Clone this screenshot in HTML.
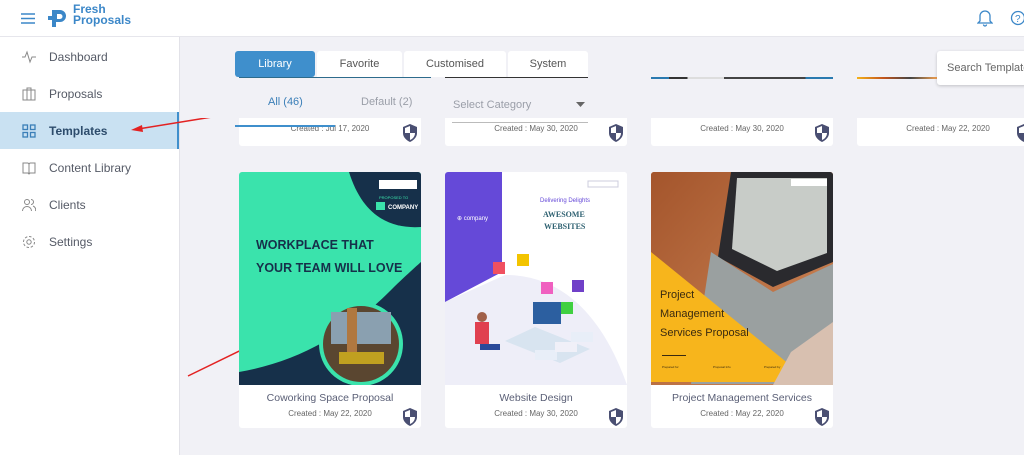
<!DOCTYPE html>
<html><head><meta charset="utf-8"><style>
*{margin:0;padding:0;box-sizing:border-box}
body{width:1024px;height:455px;overflow:hidden;background:#f1f1f6;font-family:"Liberation Sans",sans-serif;position:relative}
.hdr{position:absolute;left:0;top:0;width:1024px;height:37px;background:#fff;border-bottom:1px solid #e6e6ec}
.side{position:absolute;left:0;top:37px;width:180px;height:418px;background:#fff;border-right:1px solid #e2e2e8}
.nav{position:absolute;left:0;width:179px;height:37px;font-size:12px;color:#555a66;display:flex;align-items:center;padding-left:49px}
.nav svg{position:absolute;left:22px;top:12px}
.nav.act{background:#c9e1f2;color:#2d4c6c;font-weight:bold;border-right:2px solid #3f8fcc}
.card{position:absolute;width:182px;background:#fff;border-radius:3px;overflow:hidden}
.cap{position:absolute;left:0;width:182px;text-align:center;color:#5a5f76}
.t1{font-size:10.5px}.t2{font-size:8px;color:#666}
.sh{position:absolute}
.tab{position:absolute;top:51px;height:26px;background:#fff;font-size:11px;color:#555;display:flex;align-items:center;justify-content:center;border-radius:3px 3px 0 0}
</style></head><body>
<div class="hdr">
<svg style="position:absolute;left:21px;top:13px" width="14" height="11"><path d="M0 1H14M0 5.5H14M0 10H14" stroke="#3b87c8" stroke-width="1.6"/></svg>
<svg style="position:absolute;left:48px;top:7px" width="20" height="22"><path d="M4 3h8a6 6 0 0 1 0 12h-4v5h-4z" fill="#3b87c8"/><path d="M9 7h3a2.5 2.5 0 0 1 0 5h-3z" fill="#fff"/><rect x="0" y="9" width="5" height="4" fill="#3b87c8"/></svg>
<div style="position:absolute;left:73px;top:4px;font-size:12px;line-height:11px;color:#3b87c8;font-weight:bold">Fresh<br>Proposals</div>
<svg style="position:absolute;left:977px;top:9px" width="16" height="18"><path d="M3 12V7a5 5 0 0 1 10 0v5l2 2H1z M6.5 15.5a1.5 1.5 0 0 0 3 0" fill="none" stroke="#3b87c8" stroke-width="1.3"/></svg>
<svg style="position:absolute;left:1010px;top:9px" width="16" height="18"><circle cx="8" cy="9" r="6.5" fill="none" stroke="#3b87c8" stroke-width="1.3"/><text x="5" y="13" font-size="10" fill="#3b87c8" font-family="Liberation Sans">?</text></svg>
</div>
<div class="side">
<div class="nav" style="top:1px"><svg width="14" height="14"><path d="M0 7h3l2-5 3 10 2-5h4" fill="none" stroke="#888" stroke-width="1"/></svg>Dashboard</div>
<div class="nav" style="top:38px"><svg width="14" height="14"><rect x="1" y="3" width="12" height="10" fill="none" stroke="#888"/><path d="M5 3V1h4v2M5 3v10M9 3v10" fill="none" stroke="#888"/></svg>Proposals</div>
<div class="nav act" style="top:75px"><svg width="14" height="14"><g fill="none" stroke="#3b7fb8" stroke-width="1.3"><rect x="1" y="1" width="4.5" height="4.5"/><rect x="8.5" y="1" width="4.5" height="4.5"/><rect x="1" y="8.5" width="4.5" height="4.5"/><rect x="8.5" y="8.5" width="4.5" height="4.5"/></g></svg>Templates</div>
<div class="nav" style="top:112px"><svg width="14" height="14"><path d="M1 2h5l1 1 1-1h5v10H8l-1 1-1-1H1zM7 3v10" fill="none" stroke="#888"/></svg>Content Library</div>
<div class="nav" style="top:149px"><svg width="14" height="14"><circle cx="5" cy="4" r="2.5" fill="none" stroke="#888"/><path d="M0.5 13a4.5 4.5 0 0 1 9 0M9 1.5a2.5 2.5 0 0 1 0 5M11 8a4 4 0 0 1 2.5 5" fill="none" stroke="#888"/></svg>Clients</div>
<div class="nav" style="top:186px"><svg width="14" height="14"><circle cx="7" cy="7" r="2.2" fill="none" stroke="#888"/><circle cx="7" cy="7" r="5.5" fill="none" stroke="#888" stroke-dasharray="2.5 1.8"/></svg>Settings</div>
</div>
<svg style="position:absolute;left:0;top:0" width="1024" height="455"><path d="M212 117L138 129" stroke="#e32222" stroke-width="1.5"/><path d="M131 130l11-5 1 7z" fill="#e32222"/><path d="M188 376L266 338" stroke="#e32222" stroke-width="1.5"/><path d="M273 335l-11 1 3 6z" fill="#e32222"/></svg>

<!-- row1 partial cards -->
<div class="card" style="left:239px;top:100px;height:46px"><div class="cap t2" style="top:24px">Created : Jul 17, 2020</div></div>
<div class="card" style="left:445px;top:100px;height:46px"><div class="cap t2" style="top:24px">Created : May 30, 2020</div></div>
<div class="card" style="left:651px;top:100px;height:46px"><div class="cap t2" style="top:24px">Created : May 30, 2020</div></div>
<div class="card" style="left:857px;top:100px;height:46px"><div class="cap t2" style="top:24px">Created : May 22, 2020</div></div>
<div style="position:absolute;left:180px;top:37px;width:844px;height:81px;background:#f1f1f6"></div>
<div style="position:absolute;left:651px;top:77px;width:182px;height:2px;background:linear-gradient(90deg,#2a7ab0 0 10%,#333 10% 20%,#ddd 20% 40%,#444 40% 85%,#2a7ab0 85%)"></div>
<div style="position:absolute;left:857px;top:77px;width:80px;height:2px;background:linear-gradient(90deg,#f5b21a,#c2541c,#444,#f0a050)"></div>
<div style="position:absolute;left:445px;top:77px;width:143px;height:1px;background:#333"></div>
<div style="position:absolute;left:239px;top:77px;width:192px;height:1px;background:#2d6b8c"></div>
<svg class="sh" style="left:403px;top:124px" width="14" height="18"><path d="M7 0L14 3v6c0 4-3 7-7 9C3 16 0 13 0 9V3z" fill="#4a4f72"/><path d="M7 2v7H2V4zM7 9h5c0 3-2 6-5 7z" fill="#fff"/></svg>
<svg class="sh" style="left:609px;top:124px" width="14" height="18"><path d="M7 0L14 3v6c0 4-3 7-7 9C3 16 0 13 0 9V3z" fill="#4a4f72"/><path d="M7 2v7H2V4zM7 9h5c0 3-2 6-5 7z" fill="#fff"/></svg>
<svg class="sh" style="left:815px;top:124px" width="14" height="18"><path d="M7 0L14 3v6c0 4-3 7-7 9C3 16 0 13 0 9V3z" fill="#4a4f72"/><path d="M7 2v7H2V4zM7 9h5c0 3-2 6-5 7z" fill="#fff"/></svg>
<svg class="sh" style="left:1017px;top:124px" width="14" height="18"><path d="M7 0L14 3v6c0 4-3 7-7 9C3 16 0 13 0 9V3z" fill="#4a4f72"/><path d="M7 2v7H2V4zM7 9h5c0 3-2 6-5 7z" fill="#fff"/></svg>

<div class="tab" style="left:235px;width:80px;background:#3f8fcc;color:#fff;border-radius:3px">Library</div>
<div class="tab" style="left:317px;width:85px">Favorite</div>
<div class="tab" style="left:404px;width:102px">Customised</div>
<div class="tab" style="left:508px;width:80px">System</div>
<div style="position:absolute;left:268px;top:96px;font-size:11px;color:#3b7fb8">All (46)</div>
<div style="position:absolute;left:361px;top:96px;font-size:11px;color:#9a9ea8">Default (2)</div>
<div style="position:absolute;left:235px;top:125px;width:100px;height:2px;background:#3f8fcc"></div>
<div style="position:absolute;left:453px;top:99px;font-size:11px;color:#9a9ea8">Select Category</div>
<svg style="position:absolute;left:576px;top:102px" width="9" height="5"><path d="M0 0h9L4.5 5z" fill="#666"/></svg>
<div style="position:absolute;left:452px;top:122px;width:136px;height:1px;background:#bbb"></div>
<div style="position:absolute;left:937px;top:51px;width:100px;height:34px;background:#fff;border-radius:3px;box-shadow:0 1px 3px rgba(0,0,0,.2);font-size:11px;color:#666;padding:11px 0 0 10px">Search Template</div>

<!-- card 1 -->
<div class="card" style="left:239px;top:172px;height:256px">
<svg width="182" height="213" style="display:block"><rect width="182" height="213" fill="#3ae3ac"/><path d="M110 0h72v55c-30 2-58-10-72-55z" fill="#16304a"/><path d="M0 213V200c60-10 110-40 150-80 15-15 32-30 32-30V213z" fill="#16304a"/><circle cx="122" cy="172" r="42" fill="#3ae3ac"/><circle cx="122" cy="172" r="38" fill="#5a4630"/><rect x="92" y="140" width="60" height="32" fill="#8aa0b0"/><rect x="108" y="136" width="10" height="50" fill="#b07840"/><rect x="100" y="180" width="45" height="12" fill="#c0a020"/><rect x="140" y="8" width="38" height="9" fill="#fff"/><text x="140" y="27" font-size="4" fill="#3ae3ac" font-family="Liberation Sans">PROPOSED TO</text><rect x="137" y="30" width="9" height="8" fill="#3ae3ac"/><text x="149" y="37" font-size="6" fill="#fff" font-weight="bold" font-family="Liberation Sans">COMPANY</text><text x="17" y="77" font-size="12.5" font-weight="bold" fill="#16304a" font-family="Liberation Sans">WORKPLACE THAT</text><text x="17" y="100" font-size="12.5" font-weight="bold" fill="#16304a" font-family="Liberation Sans">YOUR TEAM WILL LOVE</text></svg>
<div class="cap t1" style="top:220px">Coworking Space Proposal</div>
<div class="cap t2" style="top:237px">Created : May 22, 2020</div>
</div>
<!-- card 2 -->
<div class="card" style="left:445px;top:172px;height:256px">
<svg width="182" height="213" style="display:block"><rect width="182" height="213" fill="#fff"/><path d="M0 130L60 103c40 0 90 20 122 110H0z" fill="#eeeef8"/><path d="M0 0h57v100L0 130z" fill="#6549d8"/><text x="12" y="48" font-size="6" fill="#fff" font-family="Liberation Sans">⊕ company</text><rect x="143" y="9" width="30" height="6" fill="#fff" stroke="#ccd"/><text x="95" y="30" font-size="6" fill="#6549d8" font-family="Liberation Sans">Delivering Delights</text><text x="98" y="45" font-size="8" fill="#2d6070" font-weight="bold" font-family="Liberation Serif">AWESOME</text><text x="99" y="57" font-size="8" fill="#2d6070" font-weight="bold" font-family="Liberation Serif">WEBSITES</text><rect x="48" y="90" width="12" height="12" fill="#f05060"/><rect x="72" y="82" width="12" height="12" fill="#f3c400"/><rect x="96" y="110" width="12" height="12" fill="#f060c0"/><rect x="127" y="108" width="12" height="12" fill="#7040c8"/><rect x="116" y="130" width="12" height="12" fill="#40d040"/><path d="M90 155l55 22-30 14-55-22z" fill="#d8e4f0"/><rect x="88" y="130" width="28" height="22" fill="#2c5fa0"/><rect x="30" y="150" width="14" height="22" fill="#e04050"/><circle cx="37" cy="145" r="5" fill="#a0604a"/><rect x="35" y="172" width="20" height="6" fill="#2a4a9a"/><rect x="90" y="178" width="22" height="10" fill="#e8eef8"/><rect x="110" y="170" width="22" height="10" fill="#f0f0f8"/><rect x="126" y="160" width="22" height="10" fill="#e8eef8"/></svg>
<div class="cap t1" style="top:220px">Website Design</div>
<div class="cap t2" style="top:237px">Created : May 30, 2020</div>
</div>
<!-- card 3 -->
<div class="card" style="left:651px;top:172px;height:256px">
<svg width="182" height="213" style="display:block"><rect width="182" height="213" fill="#b86a3c"/><path d="M0 0h182v213H0z" fill="url(#w)"/><defs><linearGradient id="w" x1="0" y1="0" x2="1" y2="1"><stop offset="0" stop-color="#a4552c"/><stop offset="1" stop-color="#d08a5a"/></linearGradient></defs><path d="M80 0h102v90l-60 25-55-30z" fill="#2a2a2e"/><path d="M86 6h90v75l-50 18-45-22z" fill="#c8ccc8"/><path d="M60 80l62 40 60-28v120H40z" fill="#9aa0a0"/><path d="M0 80l160 130H0z" fill="#f7b51c"/><path d="M140 180l42-30v63h-60z" fill="#d8c0b0"/><rect x="140" y="7" width="36" height="7" fill="#fff"/><text x="9" y="126" font-size="11" fill="#3a2a10" font-family="Liberation Sans">Project</text><text x="9" y="145" font-size="11" fill="#3a2a10" font-family="Liberation Sans">Management</text><text x="9" y="164" font-size="11" fill="#3a2a10" font-family="Liberation Sans">Services Proposal</text><rect x="11" y="183" width="24" height="1" fill="#3a2a10"/><g font-size="3" fill="#3a2a10" font-family="Liberation Sans"><text x="11" y="196">Prepared for</text><text x="62" y="196">Proposal Info</text><text x="113" y="196">Prepared by</text></g></svg>
<div class="cap t1" style="top:220px">Project Management Services</div>
<div class="cap t2" style="top:237px">Created : May 22, 2020</div>
</div>
<svg class="sh" style="left:403px;top:408px" width="14" height="18"><path d="M7 0L14 3v6c0 4-3 7-7 9C3 16 0 13 0 9V3z" fill="#4a4f72"/><path d="M7 2v7H2V4zM7 9h5c0 3-2 6-5 7z" fill="#fff"/></svg>
<svg class="sh" style="left:609px;top:408px" width="14" height="18"><path d="M7 0L14 3v6c0 4-3 7-7 9C3 16 0 13 0 9V3z" fill="#4a4f72"/><path d="M7 2v7H2V4zM7 9h5c0 3-2 6-5 7z" fill="#fff"/></svg>
<svg class="sh" style="left:815px;top:408px" width="14" height="18"><path d="M7 0L14 3v6c0 4-3 7-7 9C3 16 0 13 0 9V3z" fill="#4a4f72"/><path d="M7 2v7H2V4zM7 9h5c0 3-2 6-5 7z" fill="#fff"/></svg>
</body></html>
